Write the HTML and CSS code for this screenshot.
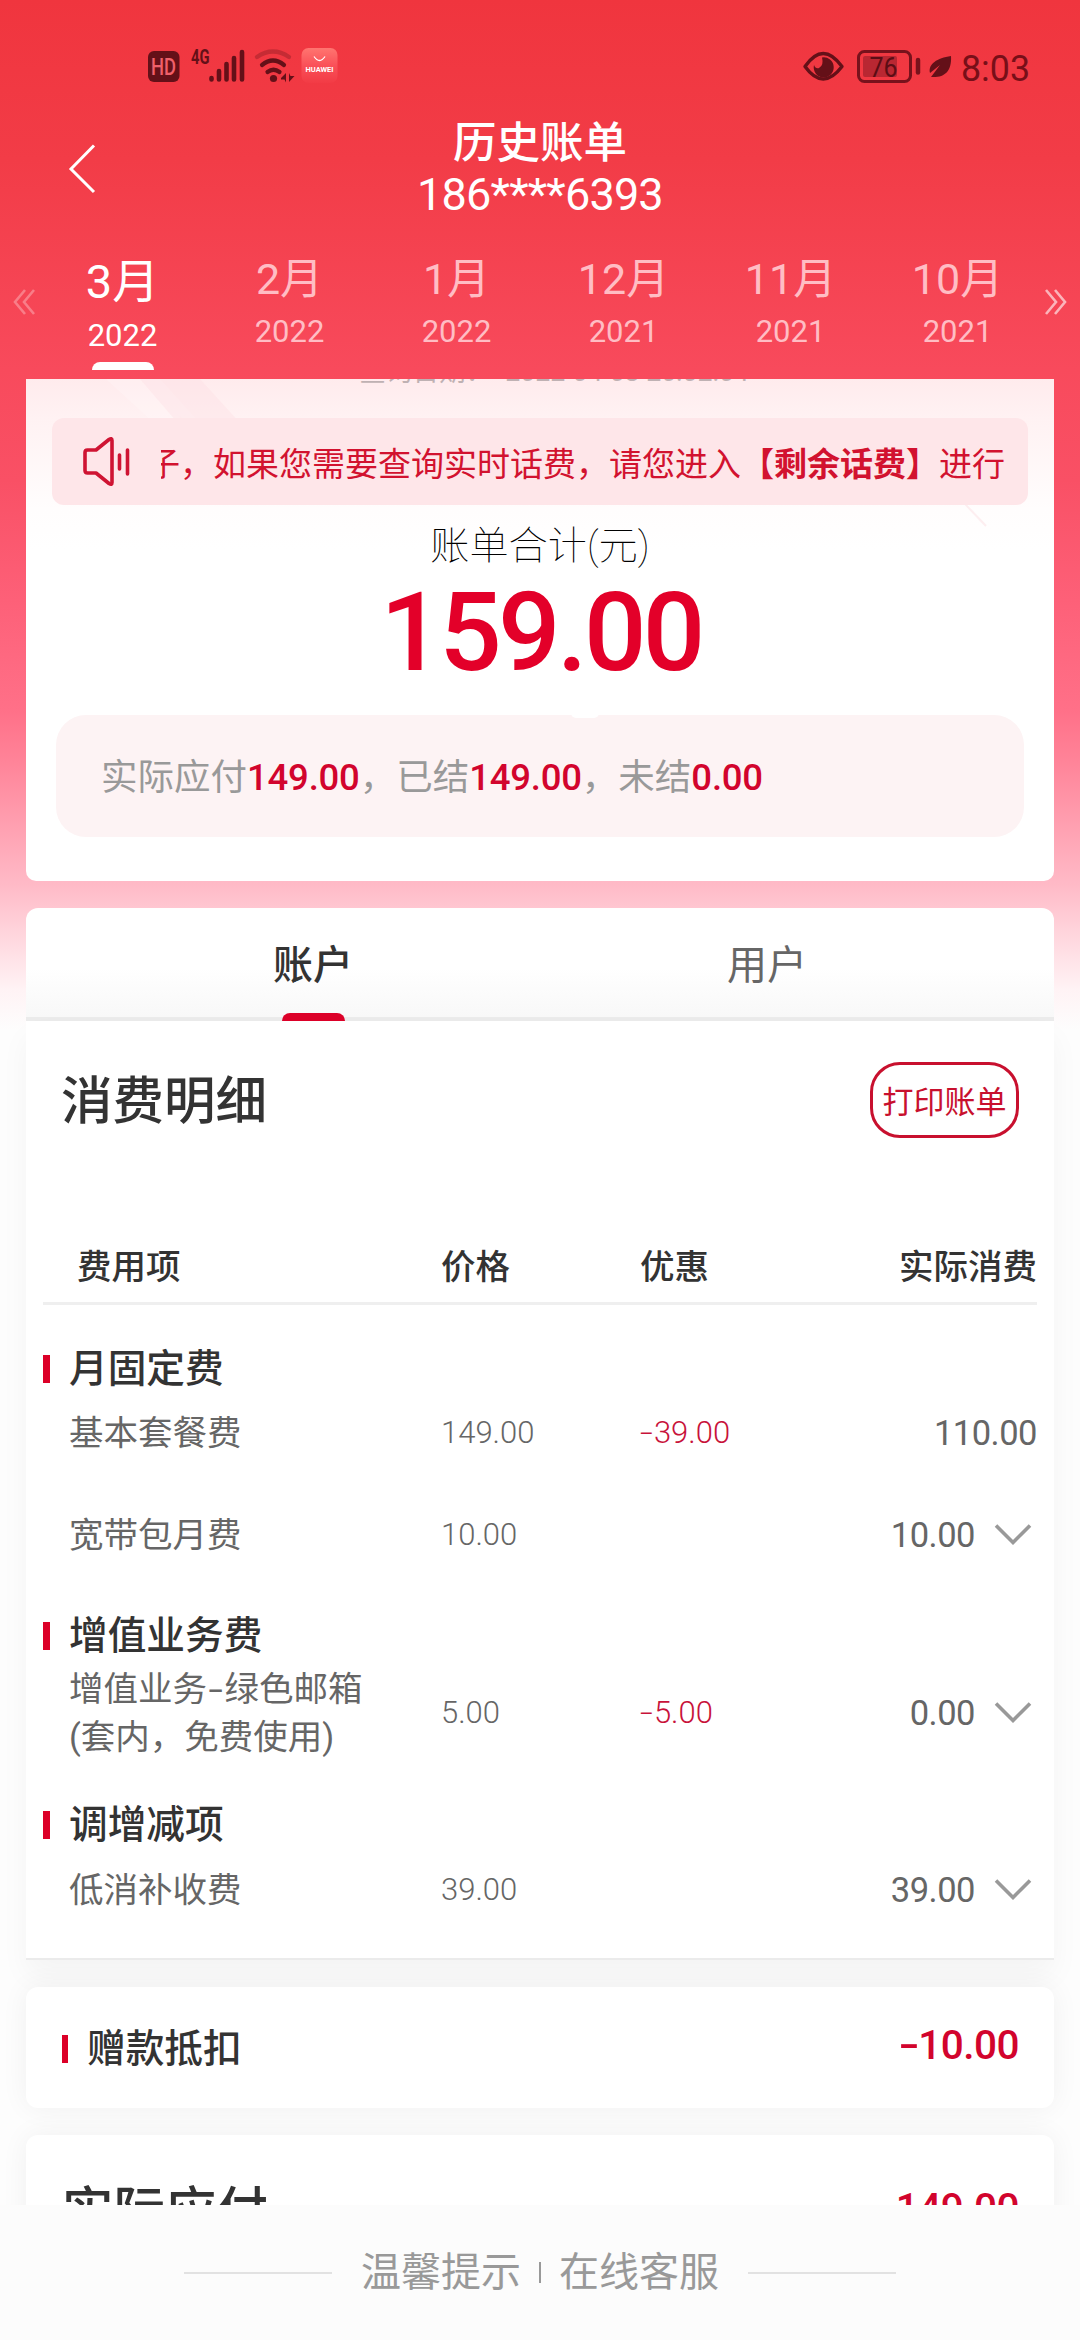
FILE: index.html
```html
<!DOCTYPE html>
<html lang="zh-CN">
<head>
<meta charset="utf-8">
<title>历史账单</title>
<link rel="stylesheet" href="styles.css">
</head>
<body>
<div class="app">
  <div class="status">
    <svg class="status-left" width="220" height="50" viewBox="0 0 220 50">
      <rect x="8" y="11" width="31.500" height="31" rx="6" fill="#641018"/>
      <text x="11" y="35" class="hd" textLength="25" lengthAdjust="spacingAndGlyphs">HD</text>
      <text x="51" y="24" class="net" textLength="18.500" lengthAdjust="spacingAndGlyphs">4G</text>
      <g stroke="#641018" stroke-width="4.600" stroke-linecap="round">
        <path d="M71.500 38v1.500M79 31v8.500M86.500 24v15.500M94 18v21.500M102 12v27.500"/>
      </g>
      <g fill="none" stroke="#641018" stroke-width="4.200" stroke-linecap="round">
        <path d="M117 17q16-11 32 0" opacity=".3"/>
        <path d="M122 25q11-9 22 0"/>
        <path d="M127.500 32q6-4.500 12 0"/>
      </g>
      <circle cx="133.500" cy="38.500" r="3.600" fill="#641018"/>
      <path d="M141 38l5-5v9.500l-1.500-3h-3.500zM149 33l1.500 3h4l-5.500 6z" fill="#641018"/>
      <defs>
        <linearGradient id="badge" x1="0" y1="0" x2="0" y2="1">
          <stop offset="0" stop-color="#ff7570"/><stop offset=".5" stop-color="#fa5058"/><stop offset="1" stop-color="#f23b45"/>
        </linearGradient>
      </defs>
      <rect x="161.500" y="8" width="36" height="35" rx="7" fill="url(#badge)"/>
      <path d="M174 16.500q5.500 8 11 0" fill="none" stroke="#fff" stroke-width="1.300"/>
      <text x="165.500" y="31.500" class="brand" textLength="28" lengthAdjust="spacingAndGlyphs">HUAWEI</text>
    </svg>
    <svg class="status-right" width="260" height="50" viewBox="0 0 260 50">
      <path d="M4 26.500q18-26 37 0q-19 25-37 0z" fill="none" stroke="#641018" stroke-width="3.400" stroke-linejoin="round"/>
      <path d="M21 17.500a10 10 0 1 1-8 7.500q1.500 4 5 3q5-2.500 3-10.500z" fill="#641018"/>
      <rect x="57.500" y="11.500" width="52" height="30" rx="6" fill="none" stroke="#78121c" stroke-width="3"/>
      <rect x="62" y="16" width="34" height="21" rx="2" fill="#b92732"/>
      <text x="68.500" y="36.500" class="level" textLength="28" lengthAdjust="spacingAndGlyphs">76</text>
      <path d="M117 20v12.500" stroke="#78121c" stroke-width="4.500" stroke-linecap="round"/>
      <path d="M150 16c-14 2-23 8-21 17l10-8-9 12c13 1 21-5 20-21z" fill="#641018"/>
      <text x="160" y="40.500" class="clock" textLength="69" lengthAdjust="spacingAndGlyphs">8:03</text>
    </svg>
  </div>

  <header class="head">
    <svg class="back" width="30" height="52" viewBox="0 0 30 52"><path d="M26 2.500L3 26l23 23" fill="none" stroke="#fff" stroke-width="3"/></svg>
    <div class="head-title">
      <h1>历史账单</h1>
      <p>186****6393</p>
    </div>
  </header>

  <nav class="months">
    <svg class="arrow dim" width="24" height="28" viewBox="0 0 24 28"><path d="M13 2L3 14l10 12M22 2L12 14l10 12"/></svg>
    <div class="month-list">
      <div class="month active"><b>3月</b><span>2022</span></div>
      <div class="month"><b>2月</b><span>2022</span></div>
      <div class="month"><b>1月</b><span>2022</span></div>
      <div class="month"><b>12月</b><span>2021</span></div>
      <div class="month"><b>11月</b><span>2021</span></div>
      <div class="month"><b>10月</b><span>2021</span></div>
    </div>
    <svg class="arrow" width="24" height="28" viewBox="0 0 24 28"><path d="M2 2l10 12L2 26M11 2l10 12-10 12"/></svg>
  </nav>

  <main class="content">
    <section class="card total">
      <svg class="rays" width="1028" height="220" viewBox="0 0 1028 220">
        <path d="M80 0h40l80 90h-22zM102 0h32l60 66z" fill="#fff" opacity=".2"/>
        <path d="M114 0h60l60 66v20h-46z" fill="#fbdde1" opacity=".35"/>
        <path d="M900 84l60 63" stroke="#fdeef0" stroke-width="2"/>
      </svg>
      <p class="query-date">查询日期：&nbsp;&nbsp;2022-04-03 20:02:04</p>
      <div class="notice">
        <svg width="50" height="52" viewBox="0 0 50 52" fill="none" stroke="#cf1433" stroke-width="3.600" stroke-linecap="round" stroke-linejoin="round"><path d="M3 16.500q0-2.500 2.500-2.500H14L27 3.500q3-2 3 1v42q0 3-3 1L14 37H5.500Q3 37 3 34.500z"/><path d="M37.500 19v14M45.500 14v24"/></svg>
        <p class="marquee"><span>子，如果您需要查询实时话费，请您进入<b>【剩余话费】</b>进行</span></p>
      </div>
      <p class="total-label">账单合计(元)</p>
      <p class="total-value">159.00</p>
      <div class="pay"><i class="nub"></i>实际应付<em>149.00</em>，已结<em>149.00</em>，未结<em>0.00</em></div>
    </section>

    <section class="tabs">
      <div class="tab on">账户</div>
      <div class="tab">用户</div>
    </section>

    <section class="detail">
      <div class="detail-head"><h2>消费明细</h2><button class="print">打印账单</button></div>
      <div class="cols thead"><span>费用项</span><span>价格</span><span>优惠</span><span>实际消费</span></div>
      <h3 class="group g1">月固定费</h3>
      <div class="cols row"><span>基本套餐费</span><span>149.00</span><span class="off"><i class="dash">-</i>39.00</span><span>110.00</span></div>
      <div class="cols row r2"><span>宽带包月费</span><span>10.00</span><span></span><span>10.00<svg class="more" width="38" height="24" viewBox="0 0 38 24"><path d="M2 2.500l17 17 17-17"/></svg></span></div>
      <h3 class="group g2">增值业务费</h3>
      <div class="cols row r3"><span>增值业务<i class="dash">-</i>绿色邮箱<br>(套内，免费使用)</span><span>5.00</span><span class="off"><i class="dash">-</i>5.00</span><span>0.00<svg class="more" width="38" height="24" viewBox="0 0 38 24"><path d="M2 2.500l17 17 17-17"/></svg></span></div>
      <h3 class="group g3">调增减项</h3>
      <div class="cols row r4"><span>低消补收费</span><span>39.00</span><span></span><span>39.00<svg class="more" width="38" height="24" viewBox="0 0 38 24"><path d="M2 2.500l17 17 17-17"/></svg></span></div>
    </section>

    <section class="card gift"><h3 class="group">赠款抵扣</h3><strong><i class="dash">-</i>10.00</strong></section>
    <section class="card due"><h2>实际应付</h2><strong>149.00</strong></section>
  </main>

  <footer class="foot"><hr><span>温馨提示</span><i></i><span>在线客服</span><hr></footer>
</div>
</body>
</html>
```
FILE: styles.css
```css
* { box-sizing: border-box; margin: 0; padding: 0; }
body { width: 1080px; height: 2340px; overflow: hidden; font-family: Roboto, "Noto Sans CJK SC", sans-serif; color: #333; background: #fdfdfd; }
i, em { font-style: normal; }
.app {
  width: 1080px; height: 2340px; display: flex; flex-direction: column;
  background: linear-gradient(#f0353e 0, #f23c47 160px, #f84a5c 370px, #f95065 480px, #fd6078 600px, #ff7088 710px, #ff8398 760px, #ffbac7 885px, #ffd3db 930px, #fff3f5 990px, #fdfdfd 1030px);
}
.status { height: 110px; padding: 40px 29px 0 140px; display: flex; justify-content: space-between; }
.status-right { margin-right: -10px; }
.hd { font: 500 24px Roboto; fill: #f0606a; }
.net { font: 700 21px Roboto; fill: #641018; }
.brand { font: 700 7px Roboto; fill: #fff; }
.level { font: 400 27px Roboto; fill: #5c0d15; }
.clock { font: 400 37px Roboto; fill: #780f18; }

.head { height: 130px; display: grid; grid-template-columns: 67px 1fr 67px; color: #fff; }
.back { margin: 33px 0 0 68px; }
.head-title { text-align: center; padding-top: 9px; }
.head-title h1 { font-size: 43.500px; line-height: 50px; font-weight: 500; }
.head-title p { font-size: 45px; line-height: 50px; letter-spacing: -0.8px; font-weight: 400; margin-top: 1px; }

.months { height: 139px; display: flex; padding-left: 12px; gap: 3px; }
.month-list { display: flex; width: 1002px; flex: none; }
.arrow { margin-top: 48px; fill: none; stroke: rgba(255,255,255,.6); stroke-width: 2.600px; flex: none; }
.arrow.dim { stroke: rgba(255,255,255,.3); }
.month { width: 167px; height: 130px; display: flex; flex-direction: column; align-items: center; color: #ffbdc4; }
.month b { font-weight: 400; font-size: 43px; line-height: 50px; margin-top: 14px; }
.month span { font-size: 31px; line-height: 40px; margin-top: 8px; }
.month.active { color: #fff; }
.month.active b { font-size: 47px; margin-top: 17px; }
.month.active span { margin-top: 9px; }
.month.active::after { content: ""; width: 62px; height: 8px; margin-top: 6px; border-radius: 8px 8px 0 0; background: #fff; }

.content { height: 1826px; padding: 0 26px; overflow: hidden; }
.card { background: #fff; border-radius: 12px; }
.total { position: relative; height: 502px; border-radius: 0 0 10px 10px; padding: 39px 26px 0; background: linear-gradient(#ffebed, #fff2f3 40px, #fffdfd 130px, #fff 170px); overflow: hidden; }
.rays { position: absolute; left: 0; top: 0; }
.query-date { position: absolute; left: 0; right: 0; top: -25px; padding-left: 28px; font-size: 26.600px; line-height: 36px; text-align: center; color: #bfb1b3; white-space: nowrap; }
.notice { position: relative; height: 87px; border-radius: 12px; background: #fee6e9; display: flex; align-items: center; padding: 0 22px 0 30px; }
.notice svg { flex: none; }
.marquee { width: 844px; margin-left: 29px; overflow: hidden; display: flex; justify-content: flex-end; font-size: 33px; line-height: 50px; color: #d2122f; font-family: "Noto Sans CJK SC", sans-serif; white-space: nowrap; }
.total-label { margin-top: 16px; text-align: center; font-size: 39.200px; line-height: 50px; font-weight: 100; color: #000; }
.total-value { text-align: center; font-size: 110px; line-height: 120px; font-weight: 500; color: #e30029; letter-spacing: -3.600px; margin: 2px 0 0 2px; }
.pay { position: relative; height: 122px; margin: 22px 4px 0; border-radius: 30px; background: #fdf3f4; padding-left: 45px; font-size: 36.500px; line-height: 126px; color: #999; }
.pay em { color: #d2042d; letter-spacing: -.2px; font-weight: 500; }
.nub { position: absolute; left: 515px; top: -8px; width: 28px; height: 11px; border-radius: 5px; background: #fff; }

.tabs { height: 113px; margin-top: 27px; border-radius: 12px 12px 0 0; padding: 0 60px; display: flex; border-bottom: 4px solid #ebebeb; background: linear-gradient(#fff 55%, #f8f8f8); }
.tab { flex: 1; height: 113px; display: flex; flex-direction: column; align-items: center; font-size: 40px; line-height: 115px; color: #666; }
.tab.on { color: #333; font-weight: 500; }
.tab.on::after { content: ""; width: 63px; height: 8px; flex: none; margin-top: -10px; background: #dc0028; border-radius: 10px 10px 0 0; z-index: 1; }

.detail { height: 939px; background: #fff; border-bottom: 2px solid #ebebeb; box-shadow: 0 16px 28px rgba(0,0,0,.04); padding: 0 17px; }
.detail-head { height: 157px; display: flex; justify-content: space-between; align-items: center; padding: 0 18px; }
h2 { font-size: 51.500px; line-height: 70px; font-weight: 500; }
.detail-head h2 { margin-top: 5px; }
.print { width: 149px; height: 76px; border: 3px solid #c8102e; border-radius: 30px; background: #fff; font: 400 31px/60px "Noto Sans CJK SC", sans-serif; color: #c8102e; }
.cols { display: grid; grid-template-columns: 398px 199px 1fr 200px; align-items: center; }
.cols > :last-child { text-align: right; display: flex; justify-content: flex-end; align-items: center; }
.thead { height: 127px; padding-top: 54px; border-bottom: 3px solid #efefef; font-size: 34.500px; font-weight: 500; white-space: nowrap; line-height: 50px; }
.thead span:first-child { padding-left: 34px; }
.group { font-size: 38.700px; line-height: 50px; font-weight: 500; display: flex; align-items: center; gap: 19px; }
.group::before { content: ""; width: 7px; height: 28px; background: #dc0028; }
.g1 { margin-top: 39px; }
.row { margin-top: 15px; min-height: 48px; font-size: 31px; font-weight: 300; line-height: 48px; color: #666; }
.row span:first-child { font-size: 34.500px; font-weight: 400; padding-left: 26px; white-space: nowrap; }
.row span:last-child { font-size: 34.500px; font-weight: 400; letter-spacing: -.5px; }
.row .off { color: #c8123a; }
.dash { display: inline-block; transform: scaleX(1.500); margin: 0 3px 0 2px; }
.row span:first-child .dash { margin: 0 4px; }
.more { margin-left: 19px; margin-right: 5px; fill: none; stroke: #999; stroke-width: 3.600px; flex: none; }
.r2 { margin-top: 54px; }
.g2 { margin-top: 52px; }
.r3 { margin-top: 4px; }
.g3 { margin-top: 39px; }
.r4 { margin-top: 16px; }

.gift, .due { box-shadow: 0 0 28px rgba(0,0,0,.055); display: flex; justify-content: space-between; padding: 0 35px 0 36px; }
.gift { height: 121px; margin-top: 27px; align-items: center; }
.gift .group { margin-top: 3px; gap: 19px; }
.gift .group::before { width: 6px; }
.due { height: 150px; margin-top: 27px; padding-top: 42px; }
strong { font-size: 40.500px; line-height: 50px; font-weight: 500; color: #d2042d; letter-spacing: -.5px; }
.gift strong { margin-top: -6px; }
.due strong { margin-top: 6px; }

.foot { height: 135px; background: #fcfcfc; display: flex; align-items: center; justify-content: center; font-size: 40px; line-height: 50px; color: #999; }
.foot hr { width: 148px; height: 2px; border: 0; background: #e2e2e2; }
.foot hr:first-child { margin-right: 29px; }
.foot hr:last-child { margin-left: 29px; }
.foot i { width: 2px; height: 21px; background: #999; margin: 0 18px; }
```
